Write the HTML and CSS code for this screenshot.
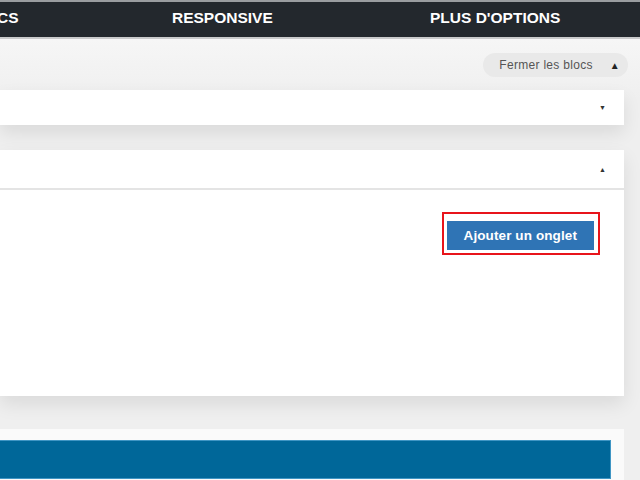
FILE: index.html
```html
<!DOCTYPE html>
<html lang="fr">
<head>
<meta charset="utf-8">
<title>Onglets</title>
<link rel="stylesheet" href="styles.css">
</head>
<body>
<header class="topbar">
  <nav class="tabs">
    <span class="tab tab-cut">CS</span>
    <span class="tab">RESPONSIVE</span>
    <span class="tab">PLUS D'OPTIONS</span>
  </nav>
</header>
<main class="main">
  <div class="toolbar">
    <button class="pill">Fermer les blocs <span class="pill-caret">&#9650;</span></button>
  </div>
  <section class="panel panel-closed">
    <div class="panel-head"><span class="caret">&#9660;</span></div>
  </section>
  <section class="panel panel-open">
    <div class="panel-head panel-head-border"><span class="caret">&#9650;</span></div>
    <div class="panel-body">
      <div class="highlight">
        <button class="btn-primary">Ajouter un onglet</button>
      </div>
    </div>
  </section>
  <section class="footer-box">
    <div class="blue-bar"></div>
  </section>
</main>
</body>
</html>
```

FILE: styles.css
```css
* { box-sizing: border-box; }
html, body {
  margin: 0;
  padding: 0;
  width: 640px;
  height: 480px;
  overflow: hidden;
  background: #efefef;
  font-family: "Liberation Sans", Arial, sans-serif;
}
.topbar {
  height: 39px;
  background: #23282d;
  border-top: 2px solid #9a9da0;
  border-bottom: 2px solid #c9cacb;
}
.tabs {
  display: grid;
  grid-template-columns: 172px 258px auto;
  height: 100%;
  align-items: center;
}
.tab {
  color: #ffffff;
  font-weight: bold;
  font-size: 15.5px;
  line-height: 1;
  padding-bottom: 4px;
}
.tab-cut { margin-left: -3px; }
.main {
  background: linear-gradient(#f6f6f6, #efefef 60px);
  padding: 14px 16px 0 0;
}
.toolbar {
  display: flex;
  justify-content: flex-end;
  margin-right: -4px;
}
.pill {
  display: flex;
  align-items: center;
  gap: 17px;
  height: 24px;
  padding: 0 8px 0 16px;
  border: none;
  border-radius: 12px;
  background: #e9e9e9;
  color: #555555;
  font-family: "Liberation Sans", Arial, sans-serif;
  font-size: 12px;
  letter-spacing: 0.3px;
}
.pill-caret { font-size: 10px; color: #222; }
.panel {
  background: #ffffff;
  box-shadow: 0 8px 18px rgba(0, 0, 0, 0.09);
}
.panel-closed {
  margin-top: 13px;
  height: 35px;
}
.panel-open {
  margin-top: 25px;
  height: 246px;
}
.panel-head {
  height: 35px;
  display: flex;
  justify-content: flex-end;
  align-items: center;
  padding-right: 18px;
}
.panel-open .panel-head { height: 40px; }
.panel-head-border { border-bottom: 2px solid #e4e4e4; }
.caret { font-size: 7px; color: #333; }
.panel-body {
  display: flex;
  justify-content: flex-end;
  padding: 22px 24px 0 0;
}
.highlight {
  border: 2px solid #e8141b;
  padding: 7px 4px 3px 3px;
}
.btn-primary {
  display: block;
  height: 29px;
  padding: 0 17px;
  border: none;
  background: #2f74b5;
  color: #ffffff;
  font-family: "Liberation Sans", Arial, sans-serif;
  font-weight: bold;
  font-size: 13.5px;
  letter-spacing: 0.1px;
}
.footer-box {
  margin-top: 33px;
  height: 60px;
  background: #fafafa;
  padding: 11px 13px 0 0;
}
.blue-bar {
  height: 39px;
  background: #006799;
  border: 1px solid #3f95c4;
  border-left: none;
}
```
